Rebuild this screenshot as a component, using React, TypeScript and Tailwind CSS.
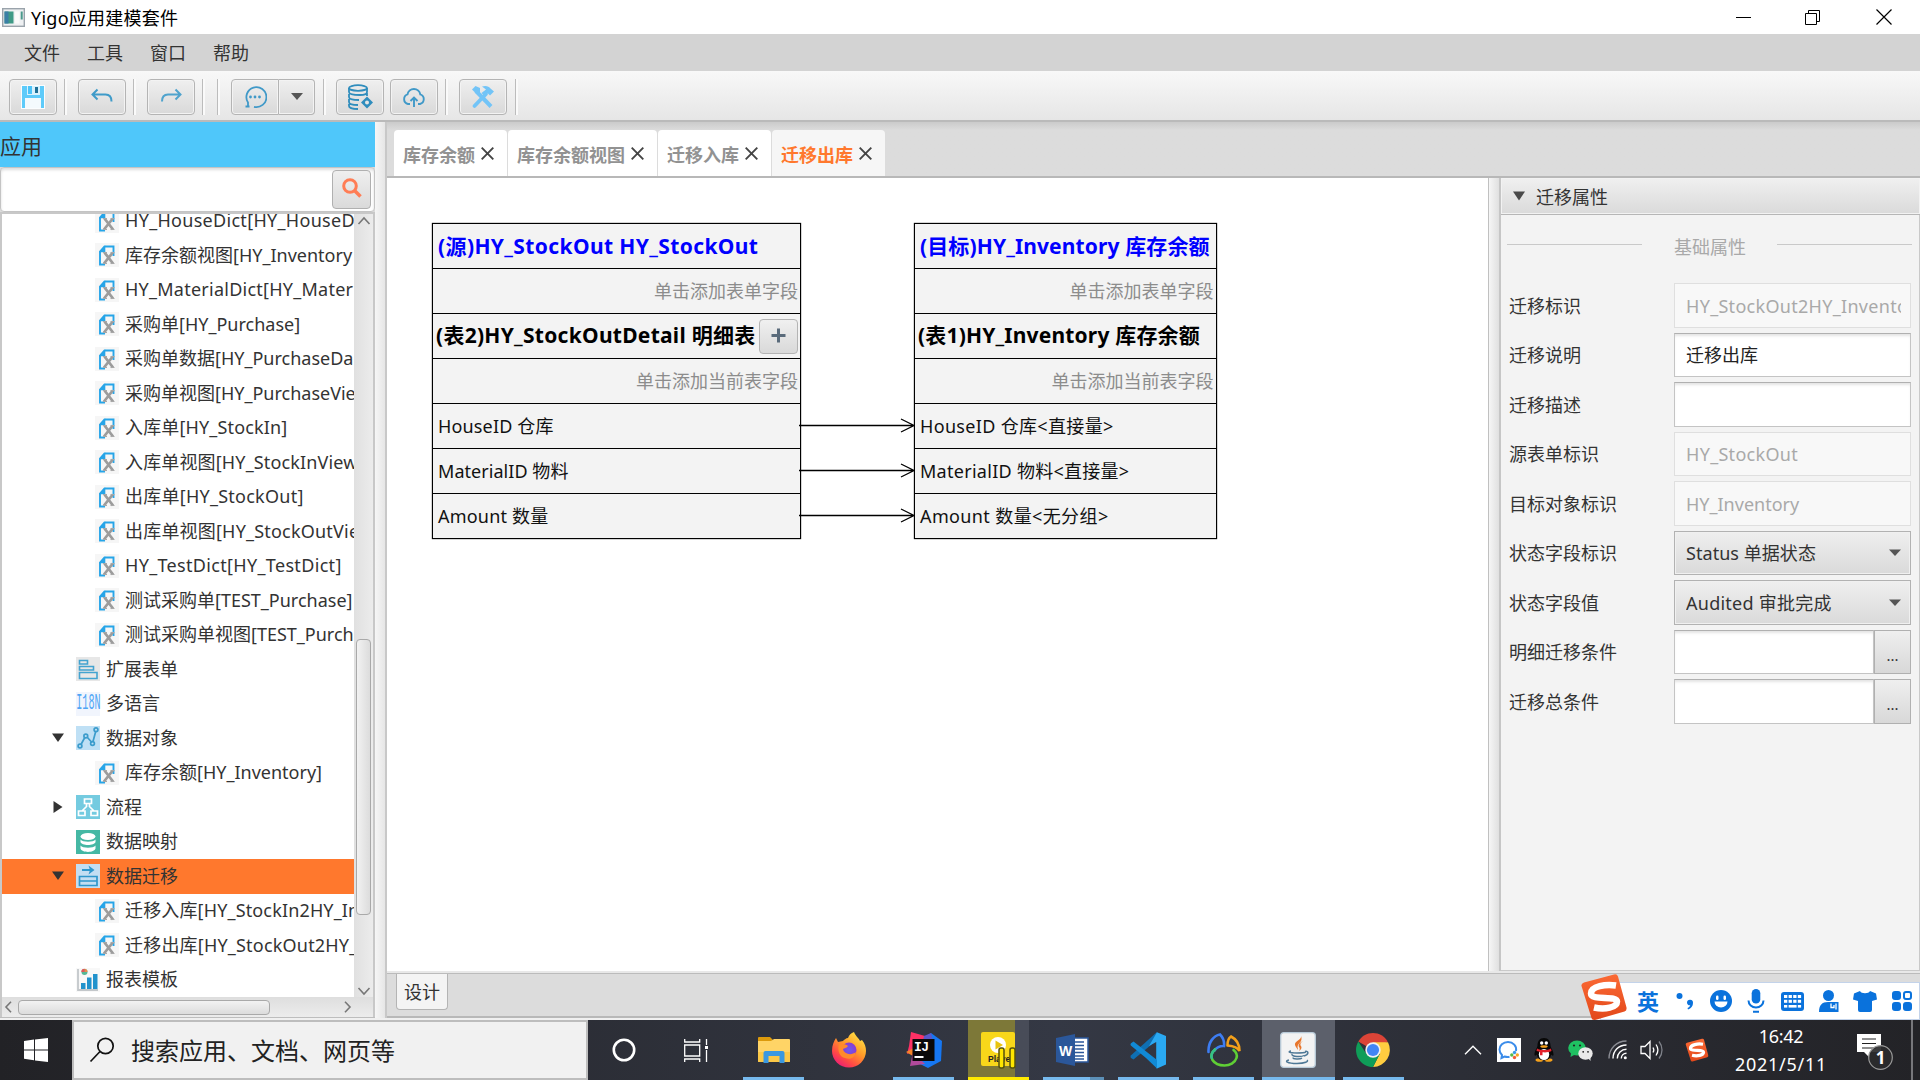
import React from 'react';

const UI = "font-['Noto_Sans','Noto_Sans_CJK_SC',sans-serif]";

/* ---------- small building blocks ---------- */

function ToolButton({ children, className = '' }: { children: React.ReactNode; className?: string }) {
  return (
    <div
      className={`flex h-9 w-12 shrink-0 items-center justify-center rounded-[4px] border border-[#b4b4b4] bg-linear-to-b from-[#efefef] to-[#d9d9d9] shadow-[inset_0_0_0_1px_#f3f3f3] ${className}`}
    >
      {children}
    </div>
  );
}

function ToolSep({ className = '' }: { className?: string }) {
  return <div className={`h-9 w-[3px] shrink-0 border-l border-[#bcbcbc] bg-[#fafafa] ${className}`} />;
}

/* ---------- toolbar icons ---------- */

const SaveIcon = () => (
  <svg width="24" height="24" viewBox="0 0 24 24">
    <rect width="24" height="24" fill="#fbfdfe" />
    <path d="M1 1h22v22H1z" fill="#5ecbfa" />
    <path d="M6 1h13v9H6z" fill="#d9f1fc" />
    <path d="M7 1h4v8H7z" fill="#4cc3f8" />
    <path d="M14 2h3v6h-3z" fill="#1f6f96" />
    <path d="M4 13h16v10H4z" fill="#f4fafd" />
  </svg>
);

const UndoIcon = () => (
  <svg width="24" height="24" viewBox="0 0 24 24" fill="none" stroke="#3f9bc9" strokeWidth="2">
    <path d="M7.500 4.500 2.500 9.500l5 5M3 9.500h12.500c4 0 6 2.500 6 7" />
  </svg>
);

const RedoIcon = () => (
  <svg width="24" height="24" viewBox="0 0 24 24" fill="none" stroke="#4fa3cd" strokeWidth="2">
    <path d="m16.500 4.500 5 5-5 5M21 9.500H9c-4 0-6 2.500-6 7" />
  </svg>
);

const ChatIcon = () => (
  <svg width="24" height="24" viewBox="0 0 24 24" fill="none" stroke="#4099c8" strokeWidth="1.800">
    <path d="M5 21.500v-4A10 10 0 1 1 11 21.800M2.500 21.500H6.500" />
    <g fill="#4099c8" stroke="none">
      <circle cx="7.500" cy="12" r="1.400" />
      <circle cx="12" cy="12" r="1.400" />
      <circle cx="16.500" cy="12" r="1.400" />
    </g>
  </svg>
);

const DbIcon = () => (
  <svg width="26" height="26" viewBox="0 0 26 26" fill="none" stroke="#2f8dbd" strokeWidth="1.800">
    <ellipse cx="11" cy="4" rx="9" ry="2.800" />
    <path d="M2 4v4c0 3 9 3 11 3s7-.5 7-3V4M2 10v3c0 2 5 3 10 3M2 15v3c0 2 4 3 9 3M2 20v2c0 2 5 3 9 3M20 9v3" />
    <path d="m20 12.500 6 6-6 6-6-6z" fill="#2f8dbd" stroke="none" />
    <circle cx="20" cy="18.500" r="2" fill="#e5e5e5" stroke="none" />
  </svg>
);

const CloudIcon = () => (
  <svg width="24" height="24" viewBox="0 0 24 24" fill="none" stroke="#4099c8" strokeWidth="1.900">
    <path d="M8 19H6a5 5 0 0 1-.5-9.600A6.500 6.500 0 0 1 18.300 9.400 5 5 0 0 1 18 19h-2M12 22v-9M8.500 16 12 12.500l3.500 3.500" />
  </svg>
);

const ToolsIcon = () => (
  <svg width="24" height="24" viewBox="0 0 24 24" fill="none" stroke="#72c4f7" strokeLinecap="round">
    <path d="M5 6l15 15.500" strokeWidth="4" strokeLinecap="butt" />
    <path d="M15 9 3.500 21" strokeWidth="3.800" />
    <path d="M1 4.500 4.500 1 9 3v4L5.500 9z" fill="#72c4f7" stroke="none" />
    <path d="M11 1.500c4-1.500 7 0 8.500 2l3.500 3-4 4-2.500-2.500-3 3-3-3L15 4.500z" fill="#72c4f7" stroke="none" />
  </svg>
);

/* ---------- tree ---------- */

const FileIcon = () => (
  <svg width="24" height="24" viewBox="0 0 24 24" className="shrink-0 bg-[#f6f6f6]">
    <path d="M10 21.500H5V8.500L9.500 3.500H18.500V13" fill="none" stroke="#27a5e8" strokeWidth="1.900" />
    <path d="M4 9.200 10.300 2.600v6.600z" fill="#27a5e8" />
    <path d="m9.500 9.500 8.500 11M17.800 9.500 9 20.500" stroke="#9c9c9c" strokeWidth="2.800" />
    <path d="M8 20.500h4M15.500 20.500h4M8 9.500h4M15.500 9.500h4" stroke="#a8a8a8" strokeWidth="1.200" />
  </svg>
);

const ExtFormIcon = () => (
  <svg width="24" height="24" viewBox="0 0 24 24" className="bg-[#e7e7e7]" fill="none" stroke="#43a3d0" strokeWidth="1.600">
    <path d="M3.500 3.500h8v3.500h-8zM3.500 9.500h14v3.500h-14zM3.500 15.500h17.500v6H3.500z" />
  </svg>
);

const I18nIcon = () => (
  <span className="flex h-6 w-6 items-center justify-center bg-[#f1f5fd]">
    <span className="block shrink-0 origin-center scale-x-[0.46] font-['Liberation_Mono',monospace] text-[22px] leading-6 text-[#4fa5f5]">I18N</span>
  </span>
);

const DataObjIcon = () => (
  <svg width="24" height="24" viewBox="0 0 24 24" className="bg-[#bfe0f5]" fill="none" stroke="#3c9ccc" strokeWidth="1.700">
    <path d="M5 18.500 8.800 11.500M11 11l5 5.500M17 15.500l2.700-10" />
    <circle cx="4" cy="20" r="1.900" />
    <circle cx="9.800" cy="10" r="1.900" />
    <circle cx="16.500" cy="17.500" r="1.900" />
    <circle cx="20" cy="3.800" r="1.900" />
  </svg>
);

const FlowIcon = () => (
  <svg width="24" height="24" viewBox="0 0 24 24" className="bg-[#74cbe0]" fill="none" stroke="#ffffff" strokeWidth="1.700">
    <path d="M8.500 4h7v4.500h-7zM2.500 16h6.500v4.500H2.500zM15 16h6.500v4.500H15zM10.500 8.500v3L6 16M13.500 8.500v3l4.500 4.500" />
  </svg>
);

const MapIcon = () => (
  <svg width="24" height="24" viewBox="0 0 24 24" className="bg-[#45b8a4]" fill="#fff">
    <ellipse cx="12" cy="6.500" rx="7.500" ry="3.500" />
    <path d="M4.500 9.500c2 3 13 3 15 0v2.500c-1 4-14 4-15 0zM4.500 15.500c2 3 13 3 15 0V18.500c-1 4.500-14 4.500-15 0z" />
  </svg>
);

const MigrateIcon = () => (
  <svg width="24" height="24" viewBox="0 0 24 24" className="bg-[#c3def2]" fill="none" stroke="#2f97cc" strokeWidth="1.700">
    <path d="M3.500 12.500H21v9H3.500zM3.500 17H21" />
    <path d="M6 6h9" strokeWidth="2" />
    <path d="m12.500 1.500 6 4.500-6 4.500 1.500-4.500z" fill="#2f97cc" stroke="none" />
  </svg>
);

const ReportIcon = () => (
  <svg width="24" height="24" viewBox="0 0 24 24" className="bg-[#f8f8f8]">
    <path d="M2 1v21h20" fill="none" stroke="#c3c7ca" strokeWidth="1.800" />
    <path d="M5 15h4.500v6H5zM11 9.500h4.500V21H11zM17 6h4.500v15H17z" fill="#2192cc" />
    <circle cx="8.500" cy="4" r="3" fill="#55b796" />
    <path d="M8.500 4V.8a3.200 3.200 0 0 1 3 3.200z" fill="#e88b4b" />
    <path d="M8.500 4H5.300a3.200 3.200 0 0 1 3.200-3.200z" fill="#e2555a" />
  </svg>
);

type Node = { t: string; icon?: () => React.ReactElement; arrow?: 'd' | 'r'; sel?: boolean; tr?: string };

const nodes: Node[] = [
  { t: 'HY_HouseDict[HY_HouseD', tr: 'tracking-[0.3px]' },
  { t: '库存余额视图[HY_Inventory' },
  { t: 'HY_MaterialDict[HY_Materi', tr: 'tracking-[0.25px]' },
  { t: '采购单[HY_Purchase]' },
  { t: '采购单数据[HY_PurchaseDa' },
  { t: '采购单视图[HY_PurchaseVie' },
  { t: '入库单[HY_StockIn]', tr: 'tracking-[0.15px]' },
  { t: '入库单视图[HY_StockInView', tr: 'tracking-[0.15px]' },
  { t: '出库单[HY_StockOut]', tr: 'tracking-[0.25px]' },
  { t: '出库单视图[HY_StockOutVie', tr: 'tracking-[0.2px]' },
  { t: 'HY_TestDict[HY_TestDict]', tr: 'tracking-[0.33px]' },
  { t: '测试采购单[TEST_Purchase]' },
  { t: '测试采购单视图[TEST_Purch' },
  { t: '扩展表单', icon: ExtFormIcon },
  { t: '多语言', icon: I18nIcon },
  { t: '数据对象', icon: DataObjIcon, arrow: 'd' },
  { t: '库存余额[HY_Inventory]' },
  { t: '流程', icon: FlowIcon, arrow: 'r' },
  { t: '数据映射', icon: MapIcon },
  { t: '数据迁移', icon: MigrateIcon, arrow: 'd', sel: true },
  { t: '迁移入库[HY_StockIn2HY_In', tr: 'tracking-[0.15px]' },
  { t: '迁移出库[HY_StockOut2HY_', tr: 'tracking-[0.2px]' },
  { t: '报表模板', icon: ReportIcon },
];

function TreeRow({ n }: { n: Node }) {
  const Icon = n.icon ?? FileIcon;
  return (
    <div className={`flex h-[34.5px] items-center ${n.sel ? 'bg-[#ff782d]' : ''}`}>
      <div className={`flex shrink-0 items-center ${n.icon ? 'w-[74px]' : 'w-[93px]'}`}>
        {n.arrow && (
          <svg width="12" height="12" viewBox="0 0 12 12" className="ml-[50px]" fill="#333">
            <path d={n.arrow === 'd' ? 'M0 1.500h12L6 10z' : 'M1.500 0v12L10.500 6z'} />
          </svg>
        )}
      </div>
      <Icon />
      <span className={`ml-1.5 text-[18px] whitespace-nowrap text-[#333] ${n.tr ?? ''}`}>{n.t}</span>
    </div>
  );
}

function Sidebar() {
  return (
    <aside className="flex w-[375px] shrink-0 flex-col">
      <div className="flex h-[45px] shrink-0 items-center bg-[#4fc7fa] pt-[3px] text-[21px] leading-none text-[#333]">应用</div>
      <div className="flex h-[45px] shrink-0 items-center justify-end rounded-[4px] border border-[#c4c4c4] bg-white pr-[3px] shadow-[inset_0_2px_3px_#dedede]">
        <div className="flex h-[39px] w-[39px] items-center justify-center rounded-[4px] border border-[#b0b0b0] bg-linear-to-b from-[#efefef] to-[#dadada]">
          <svg width="22" height="22" viewBox="0 0 22 22" fill="none" stroke="#ff7d55" className="-mt-[3px]">
            <circle cx="9" cy="9" r="6.300" strokeWidth="3" />
            <path d="m13.500 13.500 6 6" strokeWidth="3.600" />
          </svg>
        </div>
      </div>
      <div className="h-[2px] shrink-0 bg-[#c8c8c8]" />
      <div className="flex h-[783px] shrink-0 border-x-2 border-[#c8c8c8] bg-white">
        <div className="w-[352px] shrink-0 overflow-hidden">
          <div className="-mt-[10.5px]">
            {nodes.map((n) => (
              <TreeRow key={n.t} n={n} />
            ))}
          </div>
        </div>
        <div className="flex flex-1 flex-col items-center bg-linear-to-r from-[#e0e0e0] to-[#ececec]">
          <svg width="14" height="10" viewBox="0 0 14 10" className="mt-[2px]" fill="none" stroke="#777" strokeWidth="1.600">
            <path d="M1.500 8 7 2l5.500 6" />
          </svg>
          <div className="mt-[413px] h-[276px] w-[15px] rounded-[4px] border border-[#a9a9a9] bg-linear-to-r from-[#f2f2f2] to-[#dcdcdc]" />
          <svg width="14" height="10" viewBox="0 0 14 10" className="mt-[71px]" fill="none" stroke="#777" strokeWidth="1.600">
            <path d="M1.500 2 7 8l5.500-6" />
          </svg>
        </div>
      </div>
      <div className="flex h-[20px] shrink-0 items-center border-x-2 border-[#c8c8c8] bg-linear-to-b from-[#dedede] to-[#ececec]">
        <svg width="8" height="12" viewBox="0 0 8 12" className="ml-[2px]" fill="none" stroke="#777" strokeWidth="1.600">
          <path d="M7 .8 2 6l5 5.200" />
        </svg>
        <div className="ml-[6px] h-[15px] w-[252px] rounded-[4px] border border-[#a9a9a9] bg-linear-to-b from-[#f2f2f2] to-[#dcdcdc]" />
        <svg width="8" height="12" viewBox="0 0 8 12" className="ml-[74px]" fill="none" stroke="#777" strokeWidth="1.600">
          <path d="m1 .8 5 5.200-5 5.200" />
        </svg>
      </div>
      <div className="h-[1px] bg-[#bdbdbd]" />
    </aside>
  );
}

/* ---------- editor ---------- */

const CloseX = () => (
  <svg width="13" height="13" viewBox="0 0 13 13" stroke="#444" strokeWidth="1.900">
    <path d="m.7.7 11.600 11.600M12.300.7.7 12.300" />
  </svg>
);

function Tabs() {
  const tabs = [
    { t: '库存余额', w: 'w-[113px]' },
    { t: '库存余额视图', w: 'w-[149px]' },
    { t: '迁移入库', w: 'w-[113px]' },
    { t: '迁移出库', w: 'w-[113px]', on: true },
  ];
  return (
    <div className="flex h-[56px] shrink-0 items-end gap-px border-b-2 border-[#b8b8b8] bg-linear-to-b from-[#cbcbcb] via-[#dcdcdc] via-15% to-[#dcdcdc] pl-[7px]">
      {tabs.map((x) => (
        <div
          key={x.t}
          className={`flex h-[46px] items-center gap-[6px] rounded-t-[4px] pt-[5px] pl-[9px] text-[18px] font-bold whitespace-nowrap ${x.w} ${x.on ? 'bg-[#f6f6f6] text-[#ff782d]' : 'bg-white text-[#929292]'}`}
        >
          {x.t}
          <span className="-mt-[5px]">
            <CloseX />
          </span>
        </div>
      ))}
    </div>
  );
}

type Row = { t: string; k: 'title' | 'hint' | 'table' | 'field'; tr?: string; plus?: boolean };

const source: Row[] = [
  { t: '(源)HY_StockOut HY_StockOut', k: 'title', tr: 'tracking-[0.38px]' },
  { t: '单击添加表单字段', k: 'hint' },
  { t: '(表2)HY_StockOutDetail 明细表', k: 'table', plus: true, tr: 'tracking-[0.27px]' },
  { t: '单击添加当前表字段', k: 'hint' },
  { t: 'HouseID 仓库', k: 'field', tr: 'tracking-[0.15px]' },
  { t: 'MaterialID 物料', k: 'field', tr: 'tracking-[0.05px]' },
  { t: 'Amount 数量', k: 'field', tr: 'tracking-[0.2px]' },
];

const target: Row[] = [
  { t: '(目标)HY_Inventory 库存余额', k: 'title', tr: 'tracking-[0.12px]' },
  { t: '单击添加表单字段', k: 'hint' },
  { t: '(表1)HY_Inventory 库存余额', k: 'table', tr: 'tracking-[0.18px]' },
  { t: '单击添加当前表字段', k: 'hint' },
  { t: 'HouseID 仓库<直接量>', k: 'field', tr: 'tracking-[0.33px]' },
  { t: 'MaterialID 物料<直接量>', k: 'field', tr: 'tracking-[0.28px]' },
  { t: 'Amount 数量<无分组>', k: 'field', tr: 'tracking-[0.38px]' },
];

const rowStyle = {
  title: 'pl-[5px] pt-[1px] text-[21px] font-bold text-[#0000ff]',
  hint: 'justify-end pr-[2px] text-[18px] text-[#8c8c8c]',
  table: 'pl-[3px] text-[21px] font-bold text-black',
  field: 'pl-[5px] text-[18px] text-[#111]',
};

function Entity({ rows, className }: { rows: Row[]; className: string }) {
  return (
    <div className={`absolute top-[45px] border border-black bg-[#f3f3f3] shadow-[0_0_1px_#000] ${className}`}>
      {rows.map((r, i) => (
        <div
          key={r.t}
          className={`flex items-center whitespace-nowrap ${i ? 'h-[45px] border-t border-black' : 'h-[44px]'} ${rowStyle[r.k]}`}
        >
          <span className={r.tr ?? ''}>{r.t}</span>
          {r.plus && (
            <span className="mr-[2px] ml-auto flex h-[35px] w-[39px] items-center justify-center rounded-[4px] border border-[#b4b4b4] bg-linear-to-b from-[#f0f0f0] to-[#d9d9d9]">
              <svg width="15" height="15" viewBox="0 0 15 15" stroke="#5a6b7b" strokeWidth="3" className="-mt-[2px]">
                <path d="M7.500.5v14M.5 7.500h14" />
              </svg>
            </span>
          )}
        </div>
      ))}
    </div>
  );
}

function Canvas() {
  return (
    <div className="relative w-[1101px] shrink-0 overflow-hidden bg-white">
      <Entity rows={source} className="left-[45px] w-[369px]" />
      <Entity rows={target} className="left-[527px] w-[302.500px]" />
      <svg width="116" height="110" viewBox="0 0 116 110" className="absolute top-[237px] left-[412px]" fill="none" stroke="#000" strokeWidth="1.300">
        {[10.5, 55.5, 100.5].map((y) => (
          <path key={y} d={`M0 ${y}H115M102 ${y - 6.5}L115 ${y}L102 ${y + 6.5}`} />
        ))}
      </svg>
    </div>
  );
}

/* ---------- properties ---------- */

function Field({ label, value, kind, tr = '' }: { label: string; value?: string; kind: 'text' | 'off' | 'select' | 'pick'; tr?: string }) {
  const box = {
    text: 'border-[#c4c4c4] border-t-[#b0b0b0] bg-white shadow-[inset_0_3px_3px_-1px_#e4e4e4] text-[#222]',
    off: 'border-[#dfdfdf] bg-[#f8f8f8] text-[#a9a9a9]',
    select: 'border-[#b2b2b2] bg-linear-to-b from-[#efefef] to-[#dadada] shadow-[inset_0_0_0_1px_#f0f0f0] text-[#333]',
    pick: 'border-[#c4c4c4] border-t-[#b0b0b0] bg-white shadow-[inset_0_3px_3px_-1px_#e4e4e4]',
  }[kind];
  return (
    <div className="flex h-[44.500px] shrink-0 items-center">
      <span className="w-[165px] shrink-0 pt-[2px] text-[18px] text-[#333]">{label}</span>
      <div className={`flex h-full min-w-0 flex-1 items-center overflow-hidden border-[1.500px] pr-[9px] pl-[11px] text-[18px] ${box}`}>
        <span className={`min-w-0 flex-1 overflow-hidden pt-[2px] whitespace-nowrap ${tr}`}>{value}</span>
        {kind === 'select' && (
          <svg width="12" height="7" viewBox="0 0 12 7" className="shrink-0" fill="#555">
            <path d="M0 .5h12L6 7z" />
          </svg>
        )}
      </div>
      {kind === 'pick' && (
        <div className="flex h-full w-[37px] shrink-0 items-center justify-center border border-[#b0b0b0] bg-linear-to-b from-[#efefef] to-[#d8d8d8] pt-[6px] text-[15px] text-[#333]">
          ...
        </div>
      )}
    </div>
  );
}

function Properties() {
  return (
    <div className="flex w-[421px] shrink-0 flex-col border-l-2 border-[#c6c6c6] bg-[#f3f3f3]">
      <div className="flex h-[37px] shrink-0 items-center border-b border-[#b6b6b6] bg-linear-to-b from-[#f0f0f0] to-[#dadada] pl-[12px] shadow-[inset_0_0_0_1px_#f2f2f2]">
        <svg width="12" height="10" viewBox="0 0 12 10" fill="#4a4a4a">
          <path d="M0 .5h12L6 9.500z" />
        </svg>
        <span className="ml-[11px] pt-[2px] text-[18px] text-[#333]">迁移属性</span>
      </div>
      <div className="flex flex-1 flex-col border-r border-b border-[#c9c9c9] pr-[7px] pl-[6px]">
        <div className="mt-[17px] mb-[24px] flex h-[28px] shrink-0 items-center pt-[2px]">
          <div className="-mt-[5px] h-px w-[135px] shrink-0 bg-[#c9c9c9]" />
          <span className="ml-[32px] shrink-0 text-[18px] leading-none text-[#a9a9a9]">基础属性</span>
          <div className="-mt-[5px] ml-[31px] h-px w-[135px] shrink-0 bg-[#c9c9c9]" />
        </div>
        <div className="-mt-px flex flex-col gap-[5px] pr-[1px] pl-[2px]">
          <Field label="迁移标识" value="HY_StockOut2HY_Inventory" kind="off" tr="tracking-[0.3px]" />
          <Field label="迁移说明" value="迁移出库" kind="text" />
          <Field label="迁移描述" kind="text" />
          <Field label="源表单标识" value="HY_StockOut" kind="off" tr="tracking-[0.3px]" />
          <Field label="目标对象标识" value="HY_Inventory" kind="off" />
          <Field label="状态字段标识" value="Status 单据状态" kind="select" tr="tracking-[0.05px]" />
          <Field label="状态字段值" value="Audited 审批完成" kind="select" tr="tracking-[0.25px]" />
          <Field label="明细迁移条件" kind="pick" />
          <Field label="迁移总条件" kind="pick" />
        </div>
      </div>
    </div>
  );
}

/* ---------- input method bar ---------- */

function SogouLogo({ size, id }: { size: number; id: string }) {
  return (
    <svg width={size} height={size} viewBox="0 0 48 48" className="shrink-0">
      <defs>
        <linearGradient id={id} x1="0" y1="0" x2="0" y2="1">
          <stop offset="0" stopColor="#fb6a35" />
          <stop offset="1" stopColor="#e2481a" />
        </linearGradient>
      </defs>
      <path d="M4 9.500 34 1.500q3-.8 4 2l8.500 31q.5 3-2 4L15 47q-3 .5-3.500-2L1.500 13q-.5-2.500 2.500-3.500z" fill={`url(#${id})`} />
      <path d="M36 12.500C26 11 11 13 11 20.500c0 7.500 26 1.500 26 8 0 6-12 8.500-23 6" fill="none" stroke="#fff" strokeWidth="6.500" />
    </svg>
  );
}

function ImeBar() {
  const blue = '#0a72dc';
  return (
    <div className="absolute top-[973px] right-0 flex items-end">
      <div className="relative z-10 -mr-[28px] -mb-px">
        <SogouLogo size={48} id="sg-large" />
      </div>
      <div className="flex h-[38px] w-[320px] items-center border border-[#c3d3ea] bg-white">
        <span className="ml-[36px] w-[22px] text-[22px] leading-none font-bold text-[#0a72dc]">英</span>
        <svg width="20" height="22" viewBox="0 0 20 22" className="ml-[17px]" fill={blue}>
          <circle cx="3.500" cy="6" r="3" />
          <path d="M11 12.500a3 3 0 1 1 6 .500c0 3-2 5.500-5 6.500l-.5-1.500c1.500-.7 2.500-1.500 2.700-2.700A3 3 0 0 1 11 12.500z" />
        </svg>
        <svg width="22" height="22" viewBox="0 0 22 22" className="ml-[14px]" fill={blue}>
          <circle cx="11" cy="11" r="11" />
          <g fill="#fff">
            <rect x="6" y="5.500" width="2.500" height="4.500" rx="1.200" />
            <rect x="13.500" y="5.500" width="2.500" height="4.500" rx="1.200" />
            <path d="M4.500 11.500h13a6.500 6 0 0 1-13 0z" />
          </g>
        </svg>
        <svg width="18" height="24" viewBox="0 0 18 24" className="ml-[15px]" fill={blue}>
          <rect x="4.700" y="0" width="8.600" height="14.500" rx="4.300" />
          <path d="M1.500 11.500a7.500 7 0 0 0 15 0M6 22.800h6" fill="none" stroke={blue} strokeWidth="2" />
        </svg>
        <svg width="23" height="19" viewBox="0 0 23 19" className="ml-[16px]" fill={blue}>
          <rect width="23" height="19" rx="3" />
          <g fill="#fff">
            {[3, 7.600, 12.200, 16.800].map((x) => (
              <React.Fragment key={x}>
                <rect x={x} y="3" width="3.300" height="3" />
                <rect x={x} y="7.800" width="3.300" height="3" />
              </React.Fragment>
            ))}
            <rect x="3" y="13" width="3.300" height="2.600" />
            <rect x="7.600" y="13" width="8" height="2.600" />
            <rect x="16.800" y="13" width="3.300" height="2.600" />
          </g>
        </svg>
        <svg width="21" height="23" viewBox="0 0 21 23" className="ml-[15px]" fill={blue}>
          <circle cx="9.500" cy="5.500" r="5.500" />
          <path d="M0 22c0-7 3-10 9-10h10.500v10z" />
          <path d="M12 13.500v4h3v-2.500M17 13.500v6" stroke="#fff" strokeWidth="1.300" fill="none" />
        </svg>
        <svg width="24" height="21" viewBox="0 0 24 21" className="ml-[13px]" fill={blue}>
          <path d="M7 0c1 3 9 3 10 0l6 2.500 1 6-5 1.500v9q0 2-2 2H7q-2 0-2-2v-9L0 8.500l1-6z" />
        </svg>
        <svg width="20" height="20" viewBox="0 0 20 20" className="ml-[15px]" fill={blue}>
          <rect width="9" height="9" rx="3" />
          <rect y="11" width="9" height="9" rx="3" />
          <rect x="11" y="11" width="9" height="9" rx="3" />
          <rect x="12" y="1" width="7" height="7" rx="2" fill="none" stroke={blue} strokeWidth="2" />
        </svg>
      </div>
    </div>
  );
}

/* ---------- taskbar ---------- */

function Task({ children, className = '', bar = 'bg-[#76b9ed]' }: { children: React.ReactNode; className?: string; bar?: string }) {
  return (
    <div className={`flex h-[60px] w-[61px] shrink-0 flex-col ${className}`}>
      <div className="flex h-[57px] items-center justify-center pt-[3px]">{children}</div>
      <div className={`h-[3px] ${bar}`} />
    </div>
  );
}

const FolderIcon = () => (
  <svg width="34" height="28" viewBox="0 0 34 28">
    <path d="M1 2q0-1 1-1h11l3 3-2 3H1z" fill="#dc9a0c" />
    <path d="M1 5h13l3-2h15q1 0 1 1v21q0 1-1 1H2q-1 0-1-1z" fill="#ffd466" />
    <path d="M1 16h32v9q0 1-1 1H2q-1 0-1-1z" fill="#fbc847" />
    <path d="M6.500 27V17q0-2 2-2h17q2 0 2 2v10h-5v-7h-11v7z" fill="#3a98e0" />
  </svg>
);

const FirefoxIcon = () => (
  <svg width="36" height="36" viewBox="0 0 36 36">
    <defs>
      <linearGradient id="ff" x1="0.9" y1="0" x2="0.2" y2="1">
        <stop offset="0" stopColor="#fff04a" />
        <stop offset="0.450" stopColor="#ff9a28" />
        <stop offset="0.750" stopColor="#ff4a45" />
        <stop offset="1" stopColor="#e9187c" />
      </linearGradient>
      <radialGradient id="ffp">
        <stop offset="0" stopColor="#6a5bf0" />
        <stop offset="1" stopColor="#8a3bd0" />
      </radialGradient>
    </defs>
    <path d="M23 0c2 5 5 6 6 9l2-1c3 4 4 7 4 11a17 16.500 0 0 1-34 0C1 13 3 9 5 6l2 4 5-1c1-1 3-3 5-3 1-3 3-5 6-6z" fill="url(#ff)" />
    <circle cx="18" cy="18" r="7.500" fill="url(#ffp)" />
    <path d="M8 12c4 0 7 0 9 2-1 2-4 2-5 3 1 5 8 7 13 3-1 6-6 8-11 6-5-1-8-7-6-14z" fill="#ff8a2c" />
  </svg>
);

const IdeaIcon = () => (
  <svg width="36" height="36" viewBox="0 0 36 36">
    <path d="m5 0 14 4-2 12L1 22l2-8z" fill="#fd3165" />
    <path d="M0 20 8 16l6 12z" fill="#f58529" />
    <path d="m25 1 11 8-1 20-13 7-12-6 8-24z" fill="#1677f2" />
    <path d="m4 34 3-14 12 12z" fill="#b14a9c" />
    <path d="m18 4 7-3 2 8H17z" fill="#5b57c8" />
    <rect x="6.500" y="7" width="22" height="22" fill="#0a0a0a" />
    <text x="8" y="18.500" fill="#fff" fontFamily="Liberation Mono" fontWeight="700" fontSize="13" letterSpacing="-0.500">IJ</text>
    <path d="M8.500 24h9v2h-9z" fill="#fff" />
  </svg>
);

const PlayerIcon = () => (
  <svg width="37" height="38" viewBox="0 0 37 38">
    <rect x="1" y="1" width="34" height="34" rx="2" fill="#f8d71a" />
    <circle cx="18" cy="14" r="8" fill="#fff" />
    <path d="m15.500 9.500 7.500 4.500-7.500 4.500z" fill="#e8c310" />
    <text x="8" y="31" fill="#222" fontFamily="Liberation Sans" fontWeight="700" fontSize="8.500">Player</text>
    <rect x="19" y="17" width="5" height="20" rx="2" fill="#ffe600" stroke="#55520c" strokeWidth="1.500" />
    <rect x="30" y="17" width="5" height="20" rx="2" fill="#ffe600" stroke="#55520c" strokeWidth="1.500" />
  </svg>
);

const WordIcon = () => (
  <svg width="33" height="32" viewBox="0 0 33 32" className="-ml-[2px]">
    <rect x="17" y="4" width="15" height="24" fill="#fff" stroke="#2b579a" strokeWidth="1.500" />
    <path d="M19 8h9M19 11.500h9M19 15h9M19 18.500h9M19 22h9M19 25h9" stroke="#2b579a" strokeWidth="1.500" />
    <path d="M0 4 19 0v32L0 28z" fill="#2b579a" />
    <text x="3" y="21.500" fill="#fff" fontFamily="Liberation Sans" fontWeight="700" fontSize="14">W</text>
  </svg>
);

const CodeIcon = () => (
  <svg width="37" height="37" viewBox="0 0 37 37">
    <path d="M3.500 27.500 27 8V0L.8 23.500Q0 25 1 26z" fill="#0f6fb3" />
    <path d="M27 .2 36 4v28.500l-9 4-.8-.5V10L19 14z" fill="#2aa9f2" />
    <path d="M3.500 9.500 27 28v8.500L16 26 .8 13.500Q0 12 1 11.200z" fill="#118ad6" />
  </svg>
);

const NavicatIcon = () => (
  <svg width="34" height="34" viewBox="0 0 34 34" fill="none" strokeWidth="2.600" strokeLinecap="round">
    <path d="M1.500 19C1 9 7 2.500 13 1.500c3 3 4.500 7 4 11.500-4-.5-8 2-9.500 4.500" stroke="#3d7df2" />
    <path d="M20.500 12.500c0-4 1-7.500 3.500-9 5 2.500 8.500 8 8.500 14.500-1.500-3-5-5-12-5.500" stroke="#f3a01a" />
    <path d="M8 16.500c-3.500 3-4.500 7-2.500 10.500 2.500 4 7 5.500 12 5.500S28 30 29.500 25c1-3-.5-6-3-8" stroke="#5fcf35" />
    <path d="M8 16.500c-3 2.500-4 5.500-3.300 8.500" stroke="#35bf8a" />
  </svg>
);

const JavaIcon = () => (
  <svg width="36" height="36" viewBox="0 0 36 36" fill="none" className="-ml-[1px]">
    <rect x=".7" y=".7" width="34.600" height="34.600" rx="3" fill="#f3f3f3" stroke="#b9cbd9" strokeWidth="1.300" />
    <path d="M21 4c1 4-7 5-6 9 .5 2 2 3 3 5 0-2-1-3 0-5 1-2 5-4 3-9zM23 9c-4 2-5 4-4 6 1 1 1 2 0 4 3-2 3-4 1.500-5.500C20 12 21 10 23 9z" fill="#e8762c" />
    <g stroke="#4e7896" strokeWidth="1.500">
      <path d="M11 19c-3 .5-3 2 6 2 4 0 8-.5 9-1M12 22c-1 3 10 3 12 1.500M13 25.500c0 2 7 2 9 .7M25 19.500c4-1 4 3-1 4.500M9 28c-5 1-2 3.500 8 3.500 8 0 12-2 10-3.500" />
    </g>
  </svg>
);

const ChromeIcon = () => (
  <svg width="34" height="34" viewBox="0 0 34 34" className="-ml-[1px]">
    <path d="M17 17 2.300 8.500A17 17 0 0 1 31.700 8.500z" fill="#db4437" />
    <path d="M17 9.300h15A17 17 0 0 1 17 34l6.700-13z" fill="#ffcd40" />
    <path d="M10.300 20.800 2.300 8.500A17 17 0 0 0 17 34l6.700-13z" fill="#0f9d58" />
    <circle cx="17" cy="17" r="7.700" fill="#f1f1f1" />
    <circle cx="17" cy="17" r="6.100" fill="#4285f4" />
  </svg>
);

function Tray() {
  return (
    <>
      <svg width="18" height="10" viewBox="0 0 18 10" className="ml-[60px] shrink-0" fill="none" stroke="#fff" strokeWidth="1.400">
        <path d="M1 9.200 9 1.200l8 8" />
      </svg>
      <svg width="24" height="24" viewBox="0 0 24 24" className="ml-[15px] shrink-0">
        <rect width="24" height="24" fill="#fff" />
        <path d="M19 13c1-5-3-9-8-9-5 0-8.500 3.500-8.500 7.500 0 2.500 1 4 2.500 5.500l-.5 3 3-1.500c1.500.5 3.500.7 5 .3" fill="none" stroke="#3b8cea" strokeWidth="2" />
        <circle cx="17.500" cy="14.500" r="1.700" fill="#3b9ae8" />
        <circle cx="20.300" cy="17" r="1.700" fill="#f5a623" />
        <circle cx="17.500" cy="19.500" r="1.700" fill="#f25b3a" />
        <circle cx="14.800" cy="17" r="1.700" fill="#58b947" />
      </svg>
      <svg width="20" height="24" viewBox="0 0 20 24" className="ml-[13px] shrink-0">
        <ellipse cx="5.500" cy="22" rx="4" ry="1.800" fill="#f5a11c" />
        <ellipse cx="14.500" cy="22" rx="4" ry="1.800" fill="#f5a11c" />
        <path d="M10 0c4.500 0 6.500 3.500 6.500 7.500 0 2 3 5 3 9 0 2-1.500 1-2.500 0 0 3-3 6-7 6s-7-3-7-6c-1 1-2.500 2-2.500 0 0-4 3-7 3-9C3.500 3.500 5.500 0 10 0z" fill="#080808" />
        <ellipse cx="10" cy="16.500" rx="5.200" ry="5.500" fill="#fff" />
        <path d="M3 10.500c4 2 10 2 14 0l.5 2.500c-3 1.500-6 1.500-9 1.300v3H6v-3.500l-3.500-.8z" fill="#e3222c" />
        <circle cx="7.700" cy="5" r="1.700" fill="#fff" />
        <circle cx="12.300" cy="5" r="1.700" fill="#fff" />
        <ellipse cx="10" cy="8.500" rx="3.700" ry="1.300" fill="#f5a11c" />
      </svg>
      <svg width="25" height="21" viewBox="0 0 25 21" className="ml-[14px] shrink-0">
        <ellipse cx="9" cy="8" rx="8.800" ry="7.600" fill="#1fc162" />
        <path d="m3 13-.5 4L7 14.500z" fill="#1fc162" />
        <ellipse cx="17.500" cy="13.500" rx="7.200" ry="6.200" fill="#e9e9e9" />
        <path d="m20 18 2.500 3v-4z" fill="#e9e9e9" />
        <g fill="#222">
          <circle cx="6" cy="5.500" r="1.100" />
          <circle cx="12" cy="5.500" r="1.100" />
          <circle cx="15.200" cy="11.800" r=".9" />
          <circle cx="20" cy="11.800" r=".9" />
        </g>
      </svg>
      <svg width="19" height="20" viewBox="0 0 19 20" className="ml-[15px] shrink-0" fill="none" stroke="#fff" strokeWidth="1.400">
        <path d="M1 18.500C1 8.500 8.500 1 18.500 1" stroke="#8b8d94" />
        <path d="M5 18.500C5 10.700 10.700 5 18.500 5M9.300 18.500c0-5.200 4-9.200 9.200-9.200M13.300 18.500c0-3 2.200-5.200 5.200-5.200" />
        <circle cx="17.300" cy="17.700" r="1.500" fill="#fff" stroke="none" />
      </svg>
      <svg width="23" height="20" viewBox="0 0 23 20" className="ml-[13px] shrink-0" fill="none" stroke="#fff" strokeWidth="1.300">
        <path d="M1 6.500h4L10 1.500v17l-5-5H1z" />
        <path d="M13 7.500c1 1.500 1 3.500 0 5M16 4.500c2.300 3.300 2.300 7.700 0 11" />
        <path d="M19 1.500c4 5 4 12 0 17" stroke="#7f828a" />
      </svg>
      <div className="ml-[22px]">
        <SogouLogo size={24} id="sg-small" />
      </div>
      <div className="ml-[21px] flex h-[60px] w-[102px] shrink-0 flex-col items-center gap-[10px] pt-[7px] text-[18px] leading-[18px] text-white">
        <span className="tracking-[-0.3px]">16:42</span>
        <span className="tracking-[0.7px]">2021/5/11</span>
      </div>
      <svg width="38" height="38" viewBox="0 0 38 38" className="mt-[3px] ml-[24px] shrink-0">
        <path d="M1 1h24v18H14v6l-6-6H1z" fill="#fff" />
        <path d="M6 6h14M6 10.500h14M6 15h14" stroke="#222" strokeWidth="1.200" />
        <circle cx="24.500" cy="24.500" r="11.800" fill="#2b2b2d" fillOpacity="0.920" stroke="#9a9a9a" strokeWidth="1.200" />
        <text x="24.500" y="30.500" textAnchor="middle" fill="#fff" fontFamily="Noto Sans" fontWeight="700" fontSize="17">1</text>
      </svg>
      <div className="ml-[17px] h-full w-[2px] bg-[#77777b]" />
    </>
  );
}

function Taskbar() {
  return (
    <div className="flex h-[60px] shrink-0 items-center bg-linear-to-r from-[#222226] via-[#343844] via-55% to-[#232327]">
      <div className="flex w-[72px] shrink-0 items-center justify-center">
        <svg width="24" height="24" viewBox="0 0 24 24" fill="#fff">
          <path d="M0 3 10 1.600V11.500H0zM11 1.500 24 0v11.500H11zM0 12.500h10v9.700L0 20.800zM11 12.500h13V24l-13-1.600z" />
        </svg>
      </div>
      <div className="flex h-[60px] w-[516px] shrink-0 items-center border-2 border-[#bdbdbd] bg-[#f1f1f1]">
        <svg width="26" height="26" viewBox="0 0 26 26" className="ml-[15px]" fill="none" stroke="#111" strokeWidth="1.700">
          <circle cx="16.500" cy="9" r="7.700" />
          <path d="M11 14.500 1.500 24.500" />
        </svg>
        <span className="ml-[16px] pt-[2px] text-[24px] leading-none whitespace-nowrap text-[#222]">搜索应用、文档、网页等</span>
      </div>
      <svg width="24" height="24" viewBox="0 0 24 24" className="ml-[24px] shrink-0" fill="none" stroke="#fff" strokeWidth="2.600">
        <circle cx="12" cy="12" r="10.200" />
      </svg>
      <svg width="25" height="25" viewBox="0 0 25 25" className="ml-[48px] shrink-0" fill="none" stroke="#fff" strokeWidth="1.300">
        <path d="M.7 1v3h15V1M.7 24v-3h15v3M.7 7h15v11H.7zM22.500 1v6M22.500 12v12" />
        <path d="M21 8h3v3h-3z" fill="#fff" stroke="none" />
      </svg>
      <Task className="ml-[34px]"><FolderIcon /></Task>
      <Task className="ml-[14px]" bar=""><FirefoxIcon /></Task>
      <Task className="ml-[14px]"><IdeaIcon /></Task>
      <Task className="ml-[14px] bg-linear-to-r from-[#7d7838] from-77% to-[#484c58] to-77%" bar="bg-[#ffea00]"><PlayerIcon /></Task>
      <Task className="ml-[14px]" bar="bg-linear-to-r from-[#76b9ed] from-77% to-[#5c90b8] to-77%"><WordIcon /></Task>
      <Task className="ml-[14px]"><CodeIcon /></Task>
      <Task className="ml-[14px]"><NavicatIcon /></Task>
      <div className="ml-[8px] flex h-[60px] w-[73px] shrink-0 flex-col bg-[#5c606b]">
        <div className="flex h-[57px] items-center justify-center pt-[3px]"><JavaIcon /></div>
        <div className="h-[3px] bg-[#76b9ed]" />
      </div>
      <Task className="ml-[8px]"><ChromeIcon /></Task>
      <Tray />
    </div>
  );
}

/* ---------- window ---------- */

export default function App() {
  return (
    <div className={`relative flex h-[1080px] w-[1920px] flex-col overflow-hidden bg-[#dcdcdc] ${UI}`}>
      <header className="flex h-[34px] shrink-0 items-center bg-white">
        <svg width="23" height="19" viewBox="0 0 23 19" className="ml-[2px]">
          <rect x=".7" y=".7" width="21.600" height="17.600" fill="#eef0f2" stroke="#9aa3ab" strokeWidth="1.400" />
          <rect x="2.500" y="3.500" width="9" height="12" fill="#3f9a86" />
          <rect x="2.500" y="3.500" width="4" height="12" fill="#3b7fa6" />
          <rect x="13" y="3.500" width="4.500" height="12" fill="#fafafa" />
          <rect x="18.700" y="3.500" width="2" height="8" fill="#4a9a8c" />
        </svg>
        <span className="ml-[6px] pt-[1px] text-[18px] leading-none tracking-[0.25px] text-black">Yigo应用建模套件</span>
        <div className="ml-auto flex items-center">
          <svg width="15" height="15" viewBox="0 0 15 15" stroke="#000"><path d="M0 7.500h15" /></svg>
          <svg width="15" height="15" viewBox="0 0 15 15" className="ml-[54px]" fill="none" stroke="#000">
            <path d="M.5 3.500h11v11H.5zM3.500 3.500v-3h11v11h-3" />
          </svg>
          <svg width="16" height="16" viewBox="0 0 16 16" className="mr-[28px] ml-[56px]" stroke="#000" strokeWidth="1.200">
            <path d="m.5.5 15 15M15.500.5l-15 15" />
          </svg>
        </div>
      </header>

      <nav className="flex h-[37px] shrink-0 items-center gap-[27px] bg-[#d3d3d3] pt-[2px] pl-[24px] text-[18px] text-[#333]">
        <span>文件</span>
        <span>工具</span>
        <span>窗口</span>
        <span>帮助</span>
      </nav>

      <div className="flex h-[51px] shrink-0 items-center border-b-2 border-b-[#bababa] bg-linear-to-b from-[#f8f8f8] to-[#e6e6e6] pt-[2px] pl-[9px]">
        <ToolButton><SaveIcon /></ToolButton>
        <ToolSep className="ml-[7px]" />
        <ToolButton className="ml-[11px]"><UndoIcon /></ToolButton>
        <ToolSep className="ml-[7px]" />
        <ToolButton className="ml-[11px]"><RedoIcon /></ToolButton>
        <ToolSep className="ml-[7px]" />
        <ToolSep className="ml-[12px]" />
        <div className="ml-[11px] flex">
          <ToolButton className="rounded-r-none"><ChatIcon /></ToolButton>
          <div className="flex h-9 w-[36px] items-center justify-center rounded-r-[4px] border border-l-0 border-[#b4b4b4] bg-linear-to-b from-[#efefef] to-[#d9d9d9] shadow-[inset_0_0_0_1px_#f3f3f3]">
            <svg width="12" height="7" viewBox="0 0 12 7" fill="#555"><path d="M0 0h12L6 7z" /></svg>
          </div>
        </div>
        <ToolSep className="ml-[8px]" />
        <ToolButton className="ml-[10px]"><DbIcon /></ToolButton>
        <ToolButton className="ml-[6px]"><CloudIcon /></ToolButton>
        <ToolSep className="ml-[7px]" />
        <ToolButton className="ml-[11px]"><ToolsIcon /></ToolButton>
        <ToolSep className="ml-[8px]" />
      </div>

      <div className="flex h-[896px] shrink-0">
        <Sidebar />
        <div className="w-[12px] shrink-0 border-r-2 border-[#c8c8c8] bg-linear-to-r from-[#f6f6f6] to-[#e6e6e6]" />
        <main className="flex min-w-0 flex-1 flex-col">
          <Tabs />
          <div className="flex h-[793px] shrink-0">
            <Canvas />
            <div className="w-[11px] shrink-0 border-l border-[#c0c0c0] bg-linear-to-r from-[#f6f6f6] to-[#e0e0e0]" />
            <Properties />
          </div>
          <div className="h-[3px] shrink-0 border-b border-[#bbb] bg-[#e8e8e8]" />
          <div className="flex flex-1 items-start border-b-2 border-[#b8b8b8] bg-[#dcdcdc] pl-[9px]">
            <div className="flex h-[36px] w-[52px] items-center justify-center rounded-b-[4px] border border-t-0 border-[#b4b4b4] bg-[#f4f4f4] pt-[2px] text-[18px] text-[#333]">
              设计
            </div>
          </div>
        </main>
      </div>
      <div className="h-[2px] shrink-0 bg-[#f0f0f0]" />
      <Taskbar />
      <ImeBar />
    </div>
  );
}
